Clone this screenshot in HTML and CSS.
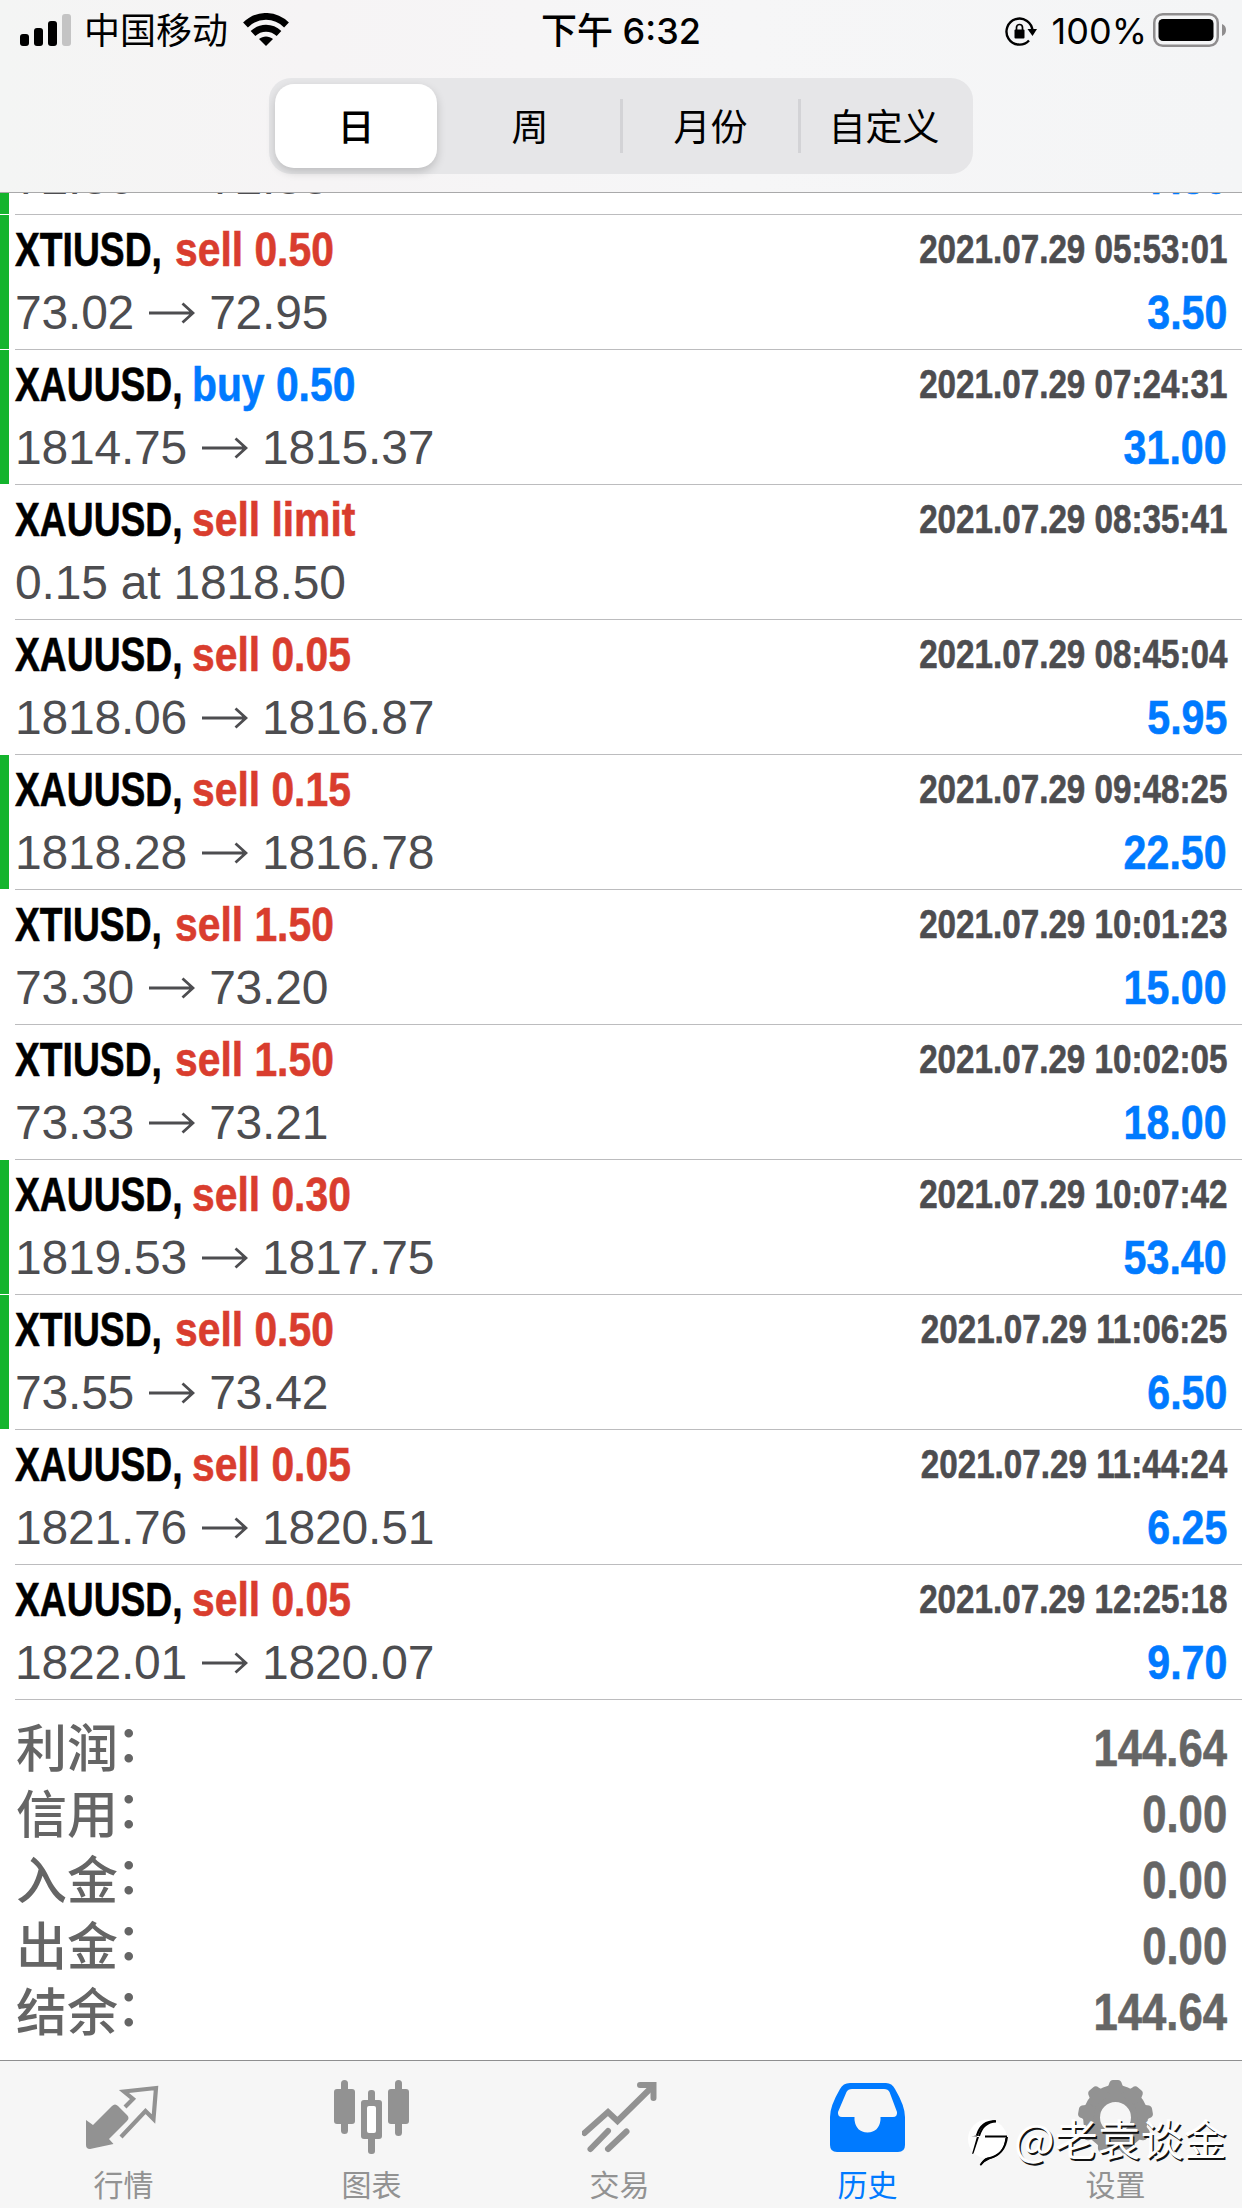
FILE: index.html
```html
<!DOCTYPE html>
<html lang="zh-CN">
<head>
  <meta charset="UTF-8">
  <title>历史</title>
  <link rel="stylesheet" href="styles.css">
</head>
<body>
  <svg class="defs">
    <symbol id="arrow" viewBox="0 0 46 22">
      <path d="M0 11H44M33.500 1.500L44 11L33.500 20.500" fill="none" stroke="#4d4d50" stroke-width="2.800"/>
    </symbol>
  </svg>

  <header class="header">
    <div class="status-bar">
      <div class="status-left">
        <svg class="signal" viewBox="0 0 51 33">
          <rect x="0" y="21" width="9" height="12" rx="3"/>
          <rect x="14" y="15" width="9" height="18" rx="3"/>
          <rect x="28" y="8" width="9" height="25" rx="3"/>
          <rect x="42" y="1" width="9" height="32" rx="3" fill="#c4c4c4"/>
        </svg>
        <span class="carrier">中国移动</span>
        <svg class="wifi" viewBox="0 0 46 33">
          <path d="M2.500 12C14 0.500 32 0.500 43.500 12" fill="none" stroke="#000" stroke-width="6.800"/>
          <path d="M10 20.500C17.500 13.500 28.500 13.500 36 20.500" fill="none" stroke="#000" stroke-width="6.800"/>
          <path d="M23 33L16 26C20 22.500 26 22.500 30 26Z"/>
        </svg>
      </div>
      <div class="clock">下午 6:32</div>
      <div class="status-right">
        <svg class="lock" viewBox="0 0 32 30">
          <path d="M27.500 14A13 13 0 1 0 24 23.500" fill="none" stroke="#000" stroke-width="2.400"/>
          <path d="M22.500 12H32L27.500 19Z"/>
          <rect x="9.500" y="12.500" width="10" height="9" rx="1"/>
          <path d="M11.500 14V10.500A3 3 0 0 1 17.500 10.500V14" fill="none" stroke="#000" stroke-width="1.700"/>
        </svg>
        <span class="percent">100%</span>
        <svg class="battery" viewBox="0 0 74 34">
          <rect x="1.250" y="1.250" width="63.500" height="31.500" rx="8.500" fill="none" stroke="#8f8d8e" stroke-width="2.500"/>
          <rect x="5.500" y="6" width="55" height="22" rx="4.500"/>
          <path d="M69 11Q73 12.500 73 17T69 23Z" fill="#8f8d8e"/>
        </svg>
      </div>
    </div>
    <div class="segments">
      <div class="segment active">日</div>
      <div class="segment">周</div>
      <div class="segment">月份</div>
      <div class="segment">自定义</div>
    </div>
  </header>

  <main class="history">
    <div class="clipped">
      <div class="deal marked">
        <div class="line prices">72.86<svg class="arrow"><use href="#arrow"/></svg>72.88<span class="profit">7.50</span></div>
      </div>
    </div>
    <div class="deal marked">
      <div class="line"><span class="name">XTIUSD,</span><span class="side sell">sell 0.50</span><span class="time">2021.07.29 05:53:01</span></div>
      <div class="line prices">73.02<svg class="arrow"><use href="#arrow"/></svg>72.95<span class="profit">3.50</span></div>
    </div>
    <div class="deal marked">
      <div class="line"><span class="name gold">XAUUSD,</span><span class="side buy">buy 0.50</span><span class="time">2021.07.29 07:24:31</span></div>
      <div class="line prices">1814.75<svg class="arrow"><use href="#arrow"/></svg>1815.37<span class="profit">31.00</span></div>
    </div>
    <div class="deal">
      <div class="line"><span class="name gold">XAUUSD,</span><span class="side sell">sell limit</span><span class="time">2021.07.29 08:35:41</span></div>
      <div class="line prices">0.15 at 1818.50</div>
    </div>
    <div class="deal">
      <div class="line"><span class="name gold">XAUUSD,</span><span class="side sell">sell 0.05</span><span class="time">2021.07.29 08:45:04</span></div>
      <div class="line prices">1818.06<svg class="arrow"><use href="#arrow"/></svg>1816.87<span class="profit">5.95</span></div>
    </div>
    <div class="deal marked">
      <div class="line"><span class="name gold">XAUUSD,</span><span class="side sell">sell 0.15</span><span class="time">2021.07.29 09:48:25</span></div>
      <div class="line prices">1818.28<svg class="arrow"><use href="#arrow"/></svg>1816.78<span class="profit">22.50</span></div>
    </div>
    <div class="deal">
      <div class="line"><span class="name">XTIUSD,</span><span class="side sell">sell 1.50</span><span class="time">2021.07.29 10:01:23</span></div>
      <div class="line prices">73.30<svg class="arrow"><use href="#arrow"/></svg>73.20<span class="profit">15.00</span></div>
    </div>
    <div class="deal">
      <div class="line"><span class="name">XTIUSD,</span><span class="side sell">sell 1.50</span><span class="time">2021.07.29 10:02:05</span></div>
      <div class="line prices">73.33<svg class="arrow"><use href="#arrow"/></svg>73.21<span class="profit">18.00</span></div>
    </div>
    <div class="deal marked">
      <div class="line"><span class="name gold">XAUUSD,</span><span class="side sell">sell 0.30</span><span class="time">2021.07.29 10:07:42</span></div>
      <div class="line prices">1819.53<svg class="arrow"><use href="#arrow"/></svg>1817.75<span class="profit">53.40</span></div>
    </div>
    <div class="deal marked">
      <div class="line"><span class="name">XTIUSD,</span><span class="side sell">sell 0.50</span><span class="time">2021.07.29 11:06:25</span></div>
      <div class="line prices">73.55<svg class="arrow"><use href="#arrow"/></svg>73.42<span class="profit">6.50</span></div>
    </div>
    <div class="deal">
      <div class="line"><span class="name gold">XAUUSD,</span><span class="side sell">sell 0.05</span><span class="time">2021.07.29 11:44:24</span></div>
      <div class="line prices">1821.76<svg class="arrow"><use href="#arrow"/></svg>1820.51<span class="profit">6.25</span></div>
    </div>
    <div class="deal">
      <div class="line"><span class="name gold">XAUUSD,</span><span class="side sell">sell 0.05</span><span class="time">2021.07.29 12:25:18</span></div>
      <div class="line prices">1822.01<svg class="arrow"><use href="#arrow"/></svg>1820.07<span class="profit">9.70</span></div>
    </div>

    <div class="totals">
      <div class="total"><span class="label">利润<span class="colon">：</span></span><span class="sum">144.64</span></div>
      <div class="total"><span class="label">信用<span class="colon">：</span></span><span class="sum">0.00</span></div>
      <div class="total"><span class="label">入金<span class="colon">：</span></span><span class="sum">0.00</span></div>
      <div class="total"><span class="label">出金<span class="colon">：</span></span><span class="sum">0.00</span></div>
      <div class="total"><span class="label">结余<span class="colon">：</span></span><span class="sum">144.64</span></div>
    </div>
  </main>

  <nav class="tabs">
    <div class="tab">
      <svg class="icon" viewBox="0 0 75 75">
        <path d="M0 40L7 45L26 26Q29 23 32 26L41 35Q44 38 41 41L23 59L27.500 64L4 69Q0 69 0 65Z" fill="#929292"/>
        <path d="M39 27L47 19L38 11.500L70 8L67.500 39L59.500 31L35 57" fill="none" stroke="#929292" stroke-width="4.200"/>
      </svg>
      <span>行情</span>
    </div>
    <div class="tab">
      <svg class="icon" viewBox="0 0 75 75" fill="#929292">
        <rect x="7" y="0" width="7" height="54" rx="3.500"/>
        <rect x="0" y="9" width="21" height="35" rx="3"/>
        <rect x="61" y="0" width="7" height="56" rx="3.500"/>
        <rect x="54" y="9" width="21" height="35" rx="3"/>
        <rect x="34" y="10" width="7" height="64" rx="3"/>
        <rect x="27" y="20" width="21" height="39" rx="3"/>
        <rect x="33" y="26" width="9" height="27" rx="2" fill="#fff"/>
      </svg>
      <span>图表</span>
    </div>
    <div class="tab">
      <svg class="icon" viewBox="0 0 75 75" fill="none" stroke="#929292" stroke-width="6" stroke-linecap="round" stroke-linejoin="round">
        <path d="M2.500 53L26 32L35.500 41L70 7" stroke-linejoin="miter"/>
        <path d="M58 5H71.500V18" stroke-linejoin="miter"/>
        <path d="M8.500 69L26 51M26 69L44.500 51.500"/>
      </svg>
      <span>交易</span>
    </div>
    <div class="tab active">
      <svg class="icon" viewBox="0 0 75 75">
        <path fill-rule="evenodd" fill="#007aff" d="M20 3H56Q62 3 65 9Q75 26 75 37V65Q75 72 68 72H7Q0 72 0 65V37Q0 26 10 9Q13 3 20 3ZM22 9Q18 9 16.500 12L8 32Q7.500 37 12 37H24.500V40Q26 52 37.500 52.500Q49 52 50.500 40V37H63Q67.500 37 67 32L59.500 12Q58 9 54 9Z"/>
      </svg>
      <span>历史</span>
    </div>
    <div class="tab">
      <svg class="icon" viewBox="0 0 75 75">
        <circle cx="37.500" cy="37.500" r="24" fill="none" stroke="#929292" stroke-width="17"/>
        <g fill="#929292">
          <path id="tooth" d="M27 9Q30 8 31 4Q32 0 35 0H40Q43 0 44 4Q45 8 48 9V16H27Z"/>
          <use href="#tooth" transform="rotate(40 37.500 37.500)"/>
          <use href="#tooth" transform="rotate(80 37.500 37.500)"/>
          <use href="#tooth" transform="rotate(120 37.500 37.500)"/>
          <use href="#tooth" transform="rotate(160 37.500 37.500)"/>
          <use href="#tooth" transform="rotate(200 37.500 37.500)"/>
          <use href="#tooth" transform="rotate(240 37.500 37.500)"/>
          <use href="#tooth" transform="rotate(280 37.500 37.500)"/>
          <use href="#tooth" transform="rotate(320 37.500 37.500)"/>
        </g>
      </svg>
      <span>设置</span>
    </div>
  </nav>

  <div class="watermark">
    <svg class="mark" viewBox="0 0 42 50">
      <circle cx="20.500" cy="22" r="19.500" fill="#fff"/>
      <path d="M4 20Q8 17.500 11 19Q15 5 28 5L29 3Q13 3 9 18L4 20L10 19.500L5 37L6.500 36.500L12 20M18 18.500H40V20.500H18ZM38.500 20Q37 39 19 41Q16 42 13 49Q18 44 23 42Q38 38 40 20Z" fill="#000"/>
      <path d="M12 19Q16 5 29 4.500M40 20Q38 38 21 41.500Q17 43 13.500 48" fill="none" stroke="#000" stroke-width="2"/>
    </svg>
    <span>@老袁谈金</span>
  </div>
</body>
</html>
```
FILE: styles.css
```css
:root {
  --blue: #007aff;
  --red: #d93d2e;
  --green: #14b42d;
  --gray: #929292;
  --dark: #4d4d50;
}

* {
  box-sizing: border-box;
}

body {
  margin: 0;
  width: 1242px;
  height: 2208px;
  position: relative;
  overflow: hidden;
  display: flex;
  flex-direction: column;
  background: #fff;
  color: #000;
  font-family: "Liberation Sans", "Noto Sans CJK SC", sans-serif;
}

svg {
  display: block;
  flex: none;
}

.defs {
  position: absolute;
  width: 0;
  height: 0;
}

.header {
  flex: none;
  height: 193px;
  background: linear-gradient(90deg, #f4f5f4, #f6f4f5 25%, #f6f6f7 60%, #f4f5f6);
  border-bottom: 1px solid #a9a9aa;
}

.status-bar {
  height: 60px;
  padding: 0 15px 0 20px;
  display: grid;
  grid-template-columns: 1fr auto 1fr;
  font-family: Inter, "Noto Sans CJK SC", sans-serif;
  font-size: 36px;
  line-height: 62px;
}

.status-left,
.status-right {
  display: flex;
  align-items: flex-start;
}

.status-right {
  justify-content: flex-end;
}

.signal {
  width: 51px;
  height: 33px;
  margin-top: 13px;
}

.carrier {
  margin-left: 13px;
}

.wifi {
  width: 46px;
  height: 33px;
  margin: 13px 0 0 15px;
}

.clock {
  margin-right: 5px;
  font-weight: 500;
}

.lock {
  width: 32px;
  height: 30px;
  margin: 17px 15px 0 0;
}

.battery {
  width: 74px;
  height: 34px;
  margin: 13px 0 0 6px;
}

.segments {
  width: 704px;
  height: 96px;
  margin: 18px auto 0;
  padding: 6px;
  display: grid;
  grid-template-columns: 162px 183px 178px 169px;
  align-items: center;
  border-radius: 22px;
  background: #e6e6e8;
}

.segment {
  height: 54px;
  line-height: 52px;
  font-family: "Noto Sans CJK SC", sans-serif;
  font-size: 37px;
  text-align: center;
  border-left: 3px solid #d3d3d6;
}

.segment.active {
  height: 84px;
  line-height: 82px;
  border: 0;
  border-radius: 19px;
  background: #fff;
  font-weight: 500;
  box-shadow: 0 4px 10px rgba(0, 0, 0, 0.18);
}

.segment.active + .segment {
  border-left-color: transparent;
}

.history {
  flex: 1;
}

.clipped {
  height: 22px;
  display: flex;
  flex-direction: column;
  justify-content: flex-end;
  overflow: hidden;
}

.deal {
  position: relative;
  flex: none;
  height: 135px;
  padding: 3px 15px 0;
}

.clipped .deal {
  height: 72px;
}

/* divider starts after the left inset */
.deal::after {
  content: "";
  position: absolute;
  left: 15px;
  right: 0;
  bottom: 0;
  height: 1px;
  background: #bcbcbe;
}

.deal.marked::before {
  content: "";
  position: absolute;
  left: 0;
  top: 0;
  bottom: 1px;
  width: 9px;
  background: var(--green);
}

.line {
  display: flex;
  align-items: center;
  height: 63px;
  line-height: 63px;
  white-space: nowrap;
  font-size: 49px;
}

.name,
.side,
.time,
.profit,
.sum {
  font-weight: bold;
  transform-origin: left;
  -webkit-text-stroke: 0.6px;
}

.name {
  width: 160px;
  transform: scaleX(0.76);
}

.name.gold {
  width: 177px;
}

.side {
  transform: scaleX(0.833);
}

.sell {
  color: var(--red);
}

.buy {
  color: var(--blue);
}

.time,
.profit,
.sum {
  margin-left: auto;
  transform-origin: right;
}

.time {
  font-size: 40px;
  color: var(--dark);
  transform: scaleX(0.83);
}

.prices {
  font-size: 48px;
  letter-spacing: -0.2px;
  color: var(--dark);
}

.arrow {
  width: 46px;
  height: 22px;
  margin: 0 14px 0 15px;
}

.profit {
  font-size: 49px;
  letter-spacing: 0;
  color: var(--blue);
  transform: scaleX(0.84);
}

.totals {
  padding: 15px 15px 0 16px;
}

.total {
  display: flex;
  height: 66px;
  line-height: 66px;
  color: #656565;
}

.label {
  line-height: 61px;
  font-family: "Noto Sans CJK SC", sans-serif;
  font-size: 51px;
  font-weight: 500;
}

.colon {
  position: relative;
  top: -5px;
  left: -2px;
}

.sum {
  font-size: 52px;
  transform: scaleX(0.84);
}

.tabs {
  flex: none;
  height: 148px;
  padding-top: 19px;
  display: grid;
  grid-template-columns: repeat(5, 248px);
  border-top: 1px solid #8f8f90;
  background: #f6f6f6;
}

.tab {
  display: flex;
  flex-direction: column;
  align-items: center;
  padding-right: 1px;
  color: var(--gray);
  font-family: "Noto Sans CJK SC", sans-serif;
  font-size: 30px;
  line-height: 56px;
}

.tab.active {
  color: var(--blue);
}

.icon {
  width: 75px;
  height: 75px;
}

.watermark {
  position: absolute;
  left: 967px;
  top: 2107px;
  display: flex;
  align-items: center;
  color: #fff;
  font-family: "Noto Sans CJK SC", sans-serif;
  font-size: 43px;
  line-height: 60px;
  text-shadow: 1.5px 1.5px 0 #111;
}

.mark {
  width: 42px;
  height: 50px;
  margin: 9px 5px 0 0;
}
```
